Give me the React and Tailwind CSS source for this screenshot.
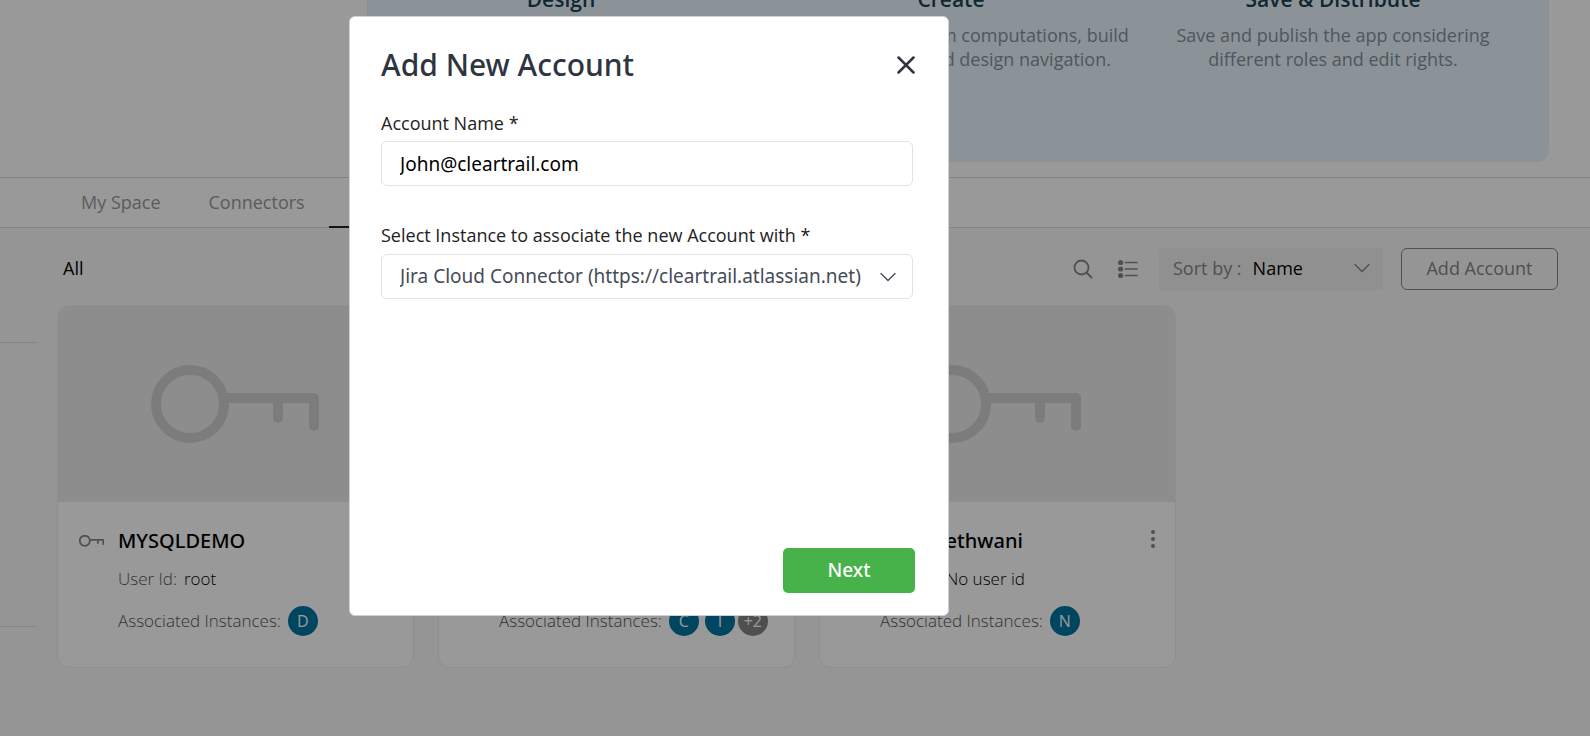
import { useState } from "react";

const KeyOutline = ({ className, strokeWidth = 10 }) => (
  <svg viewBox="0 0 168 78" className={className} fill="none" stroke="currentColor" strokeWidth={strokeWidth} strokeLinecap="round" strokeLinejoin="round" aria-hidden="true">
    <circle cx="39" cy="39" r="34" />
    <path d="M76 33H163V61M127 33V53" />
  </svg>
);

const Chevron = ({ className }) => (
  <svg viewBox="0 0 16 10" className={className} fill="none" stroke="currentColor" strokeWidth="1.4" strokeLinecap="round" strokeLinejoin="round" aria-hidden="true">
    <path d="M1 1.5L8 8.5L15 1.5" />
  </svg>
);

const steps = [
  { title: "Design", text: ["Choose a layout and design the", "look and feel of your app."] },
  { title: "Create", text: ["Choose data, perform computations, build", "dashboards, UI and design navigation."] },
  { title: "Save & Distribute", text: ["Save and publish the app considering", "different roles and edit rights."] },
];

const accounts = [
  { name: "MYSQLDEMO", user: "root", instances: ["D"] },
  { name: "JIRADEMO", user: "admin", instances: ["C", "I"], more: "+2" },
  { name: "Nisha Jethwani", user: "No user id", instances: ["N"] },
];

function Banner() {
  return (
    <section className="flex h-[162px] pr-[41px] pl-[367px]">
      <div className="grid flex-1 grid-cols-[388px_392px_1fr] rounded-b-xl bg-[#e8f5ff] pr-[30px]">
        {steps.map((s) => (
          <div key={s.title} className="-mt-[13px] text-center whitespace-nowrap">
            <h3 className="text-[21px] leading-6 font-semibold text-[#21414f]">{s.title}</h3>
            <p className="mt-3 text-[18px] leading-6 text-[#84929a]">
              {s.text[0]}
              <br />
              {s.text[1]}
            </p>
          </div>
        ))}
      </div>
    </section>
  );
}

function Tabs() {
  return (
    <nav className="mt-[15px] flex h-[51px] border-y border-[#dcdcdc] bg-white pl-[57px] text-[18px] text-[#999]">
      <a href="#space" className="flex items-center px-6">My Space</a>
      <a href="#connectors" className="flex items-center px-6">Connectors</a>
      <a href="#accounts" className="-mb-px flex items-center border-b-2 border-[#222] px-6 text-[#222]">Accounts</a>
    </nav>
  );
}

function Toolbar() {
  return (
    <div className="flex h-[42px] items-center">
      <h2 className="pb-[2px] pl-[6px] text-[18px] text-black">All</h2>
      <div className="ml-auto flex items-center gap-[18px]">
        <div className="flex items-center gap-[25px] pr-[3px] text-[#858585]">
          <button aria-label="Search">
            <svg viewBox="0 0 20 20" className="size-5" fill="none" stroke="currentColor" strokeWidth="1.8" strokeLinecap="round" aria-hidden="true">
              <circle cx="8.5" cy="8.5" r="7" />
              <path d="M13.5 13.5L18.5 18.5" />
            </svg>
          </button>
          <button aria-label="List view">
            <svg viewBox="0 0 20 20" className="size-5" fill="none" stroke="currentColor" strokeWidth="1.7" strokeLinecap="round" aria-hidden="true">
              <path d="M7.5 3.5H19M7.5 10H19M7.5 16.5H19" />
              <g fill="currentColor" stroke="none">
                <circle cx="2.6" cy="3.5" r="2.6" />
                <circle cx="2.6" cy="10" r="2.6" />
                <circle cx="2.6" cy="16.5" r="2.6" />
              </g>
            </svg>
          </button>
        </div>
        <div className="relative flex h-[42px] w-[224px] items-center rounded-xs bg-[#f1f1f1] pb-[2px] pl-[14px] text-[18px] text-[#858585]">
          <label htmlFor="sort">Sort by :</label>
          <select id="sort" className="ml-[11px] h-full flex-1 appearance-none bg-transparent text-black outline-none">
            <option>Name</option>
          </select>
          <Chevron className="pointer-events-none absolute right-[13px] w-4" />
        </div>
        <button className="h-[42px] w-[157px] rounded-md border border-[#858585] pb-[2px] text-[18px] text-[#858585]">Add Account</button>
      </div>
    </div>
  );
}

function Badge({ children, muted }) {
  return (
    <span className={`flex size-[30px] items-center justify-center rounded-full text-[16px] font-normal text-white ${muted ? "-ml-[3px] bg-[#848484]" : "bg-[#0075a0]"}`}>
      {children}
    </span>
  );
}

function AccountCard({ name, user, instances, more }) {
  return (
    <article className="w-[357px] overflow-hidden rounded-xl border border-[#ededed] bg-white">
      <div className="flex h-[196px] items-center justify-center bg-[#ebebeb] pr-[2px] text-[#cfcfcf]">
        <KeyOutline className="w-[168px]" />
      </div>
      <div className="grid h-[165px] grid-cols-[39px_1fr_22px] content-start pt-[25px] pr-[11px] pl-[21px]">
        <KeyOutline className="mt-2 w-[25px] text-[#858585]" strokeWidth={12} />
        <h3 className="font-['Noto_Sans',sans-serif] text-[20px] leading-7 font-medium text-black">{name}</h3>
        <button aria-label="More options" className="flex justify-center pt-[2px] text-[#858585]">
          <svg viewBox="0 0 4 20" className="h-5" fill="currentColor" aria-hidden="true">
            <circle cx="2" cy="3" r="2" />
            <circle cx="2" cy="10" r="2" />
            <circle cx="2" cy="17" r="2" />
          </svg>
        </button>
        <p className="col-start-2 mt-3 flex gap-[7px] text-[17px] leading-6 font-light text-[#555]">
          User Id: <span className="text-black">{user}</span>
        </p>
        <div className="col-span-2 col-start-2 mt-[15px] flex items-center gap-[6px] text-[17px] font-light whitespace-nowrap text-[#555]">
          <span className="mr-px">Associated Instances:</span>
          {instances.map((i) => (
            <Badge key={i}>{i}</Badge>
          ))}
          {more && <Badge muted>{more}</Badge>}
        </div>
      </div>
    </article>
  );
}

function AddAccountDialog() {
  const [name, setName] = useState("John@cleartrail.com");
  return (
    <div className="fixed inset-0 bg-black/40 pt-4 pl-[349px]">
      <div role="dialog" aria-modal="true" aria-labelledby="dialog-title" className="flex h-[600px] w-[600px] flex-col rounded-md border border-[#d0d0d0] bg-white pt-7 pr-[33px] pb-[22px] pl-[31px]">
        <div className="flex items-center justify-between">
          <h1 id="dialog-title" className="font-['Noto_Sans',sans-serif] text-[30px] leading-10 font-medium text-[#2f3441]">Add New Account</h1>
          <button aria-label="Close" className="text-[#2f3441]">
            <svg viewBox="0 0 18 18" className="size-[18px]" fill="none" stroke="currentColor" strokeWidth="2.5" strokeLinecap="round" aria-hidden="true">
              <path d="M1.5 1.5L16.5 16.5M16.5 1.5L1.5 16.5" />
            </svg>
          </button>
        </div>
        <div className="mt-[26px] mr-[2px] flex flex-col">
          <label htmlFor="account-name" className="text-[18px] leading-6 text-[#222]">Account Name *</label>
          <input id="account-name" value={name} onChange={(e) => setName(e.target.value)} className="mt-[6px] h-[45px] rounded-md border border-[#e3e3e3] px-[18px] font-['Noto_Sans',sans-serif] text-[19px] text-black outline-none" />
          <label htmlFor="instance" className="mt-[37px] text-[18px] leading-6 text-[#222]">Select Instance to associate the new Account with *</label>
          <div className="relative mt-[7px] flex items-center">
            <select id="instance" className="h-[45px] w-full appearance-none rounded-md border border-[#e3e3e3] pl-[18px] font-['Noto_Sans',sans-serif] text-[19px] text-[#464b58] outline-none">
              <option>Jira Cloud Connector (https://cleartrail.atlassian.net)</option>
            </select>
            <Chevron className="pointer-events-none absolute right-[17px] w-4 text-[#464b58]" />
          </div>
        </div>
        <button className="mt-auto h-[45px] w-[132px] self-end rounded-[5px] bg-[#47b14a] font-['Noto_Sans',sans-serif] text-[19px] font-medium text-white">Next</button>
      </div>
    </div>
  );
}

export default function App() {
  return (
    <div className="min-h-screen overflow-hidden bg-white font-['Open_Sans',sans-serif]">
      <Banner />
      <Tabs />
      <div className="flex min-h-[508px] bg-[#f9f9f9]">
        <aside className="w-[37px] pt-[114px]">
          <div className="h-[285px] border-y border-[#dcdcdc]" />
        </aside>
        <main className="flex-1 pt-5 pr-8 pl-5">
          <Toolbar />
          <div className="mt-[15px] flex gap-6">
            {accounts.map((a) => (
              <AccountCard key={a.name} {...a} />
            ))}
          </div>
        </main>
      </div>
      <AddAccountDialog />
    </div>
  );
}
